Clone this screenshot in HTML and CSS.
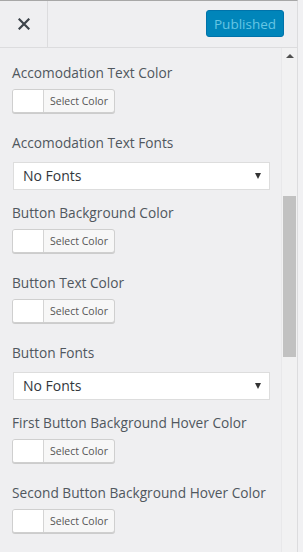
FILE: index.html
```html
<!DOCTYPE html>
<html lang="en">
<head>
  <meta charset="UTF-8">
  <title>Customizer</title>
  <link rel="stylesheet" href="styles.css">
</head>
<body>
  <div class="sidebar">
    <div class="header">
      <div class="close">
        <svg width="12" height="12" viewBox="0 0 12 12"><path d="M1.5 1.5 L10.5 10.5 M10.5 1.5 L1.5 10.5" stroke="#3c434a" stroke-width="2.2" stroke-linecap="square"/></svg>
      </div>
      <div class="header-space"></div>
      <button class="publish">Published</button>
    </div>

    <div class="body">
      <div class="controls">
        <div class="field">
          <div class="label">Accomodation Text Color</div>
          <div class="color-btn"><span class="swatch"></span><span class="color-text">Select Color</span></div>
        </div>
        <div class="field">
          <div class="label">Accomodation Text Fonts</div>
          <div class="select">No Fonts</div>
        </div>
        <div class="field">
          <div class="label">Button Background Color</div>
          <div class="color-btn"><span class="swatch"></span><span class="color-text">Select Color</span></div>
        </div>
        <div class="field">
          <div class="label">Button Text Color</div>
          <div class="color-btn"><span class="swatch"></span><span class="color-text">Select Color</span></div>
        </div>
        <div class="field">
          <div class="label">Button Fonts</div>
          <div class="select">No Fonts</div>
        </div>
        <div class="field">
          <div class="label">First Button Background Hover Color</div>
          <div class="color-btn"><span class="swatch"></span><span class="color-text">Select Color</span></div>
        </div>
        <div class="field">
          <div class="label">Second Button Background Hover Color</div>
          <div class="color-btn"><span class="swatch"></span><span class="color-text">Select Color</span></div>
        </div>
      </div>

      <div class="scrollbar">
        <div class="arrow-up"></div>
        <div class="thumb"></div>
      </div>
    </div>
  </div>
</body>
</html>
```

FILE: styles.css
```css
body {
  margin: 0;
  font-family: "Open Sans", "Noto Sans", sans-serif;
  background: #f1f1f3;
  height: 552px;
  overflow: hidden;
}
.sidebar {
  width: 298px;
  height: 552px;
  border-top: 1px solid #a7a7a7;
  border-right: 1px solid #dcdcde;
  background: #efeff1;
  box-sizing: border-box;
}
.header {
  display: flex;
  align-items: center;
  height: 47px;
  border-bottom: 1px solid #dcdcde;
  box-sizing: border-box;
}
.close {
  width: 47px;
  height: 46px;
  border-right: 1px solid #dcdcde;
  display: flex;
  align-items: center;
  justify-content: center;
}
.header-space {
  flex: 1;
}
.publish {
  width: 78px;
  height: 27px;
  margin-right: 13px;
  margin-top: -1px;
  background: #0085ba;
  border: 1px solid #0073aa;
  border-radius: 3px;
  color: #66c6e4;
  font-family: "Open Sans", sans-serif;
  font-size: 13.5px;
  padding: 0;
}
.body {
  display: flex;
  height: 504px;
}
.controls {
  flex: 1;
  padding: 15px 0 0 12px;
}
.field {
  height: 70px;
}
.label {
  font-size: 13.7px;
  line-height: 20px;
  color: #50575e;
}
.color-btn {
  display: flex;
  width: 103px;
  height: 24px;
  margin-top: 6px;
  border: 1px solid #cfcfcf;
  border-radius: 3px;
  box-shadow: 0 1px 0 #ccc;
  background: #f7f7f7;
  box-sizing: border-box;
  overflow: hidden;
}
.swatch {
  width: 30px;
  background: #fff;
  border-right: 1px solid #d4d4d4;
}
.color-text {
  flex: 1;
  font-size: 10.5px;
  line-height: 22px;
  color: #555;
  text-align: center;
}
.select {
  position: relative;
  width: 257px;
  height: 28px;
  margin: 9px 0 0 1px;
  background: #fff;
  border: 1px solid #ddd;
  box-sizing: border-box;
  font-size: 14px;
  line-height: 26px;
  color: #32373c;
  padding-left: 9px;
}
.select::after {
  content: "";
  position: absolute;
  right: 8px;
  top: 10px;
  border-left: 3px solid transparent;
  border-right: 3px solid transparent;
  border-top: 6px solid #333;
}
.scrollbar {
  width: 15px;
  background: #f1f1f2;
  border-left: 1px solid #e8e8ea;
}
.arrow-up {
  width: 0;
  margin: 6px 0 0 4px;
  border-left: 4px solid transparent;
  border-right: 4px solid transparent;
  border-bottom: 4px solid #505050;
}
.thumb {
  width: 13px;
  height: 161px;
  margin: 138px 0 0 1px;
  background: #c1c1c1;
}
```
